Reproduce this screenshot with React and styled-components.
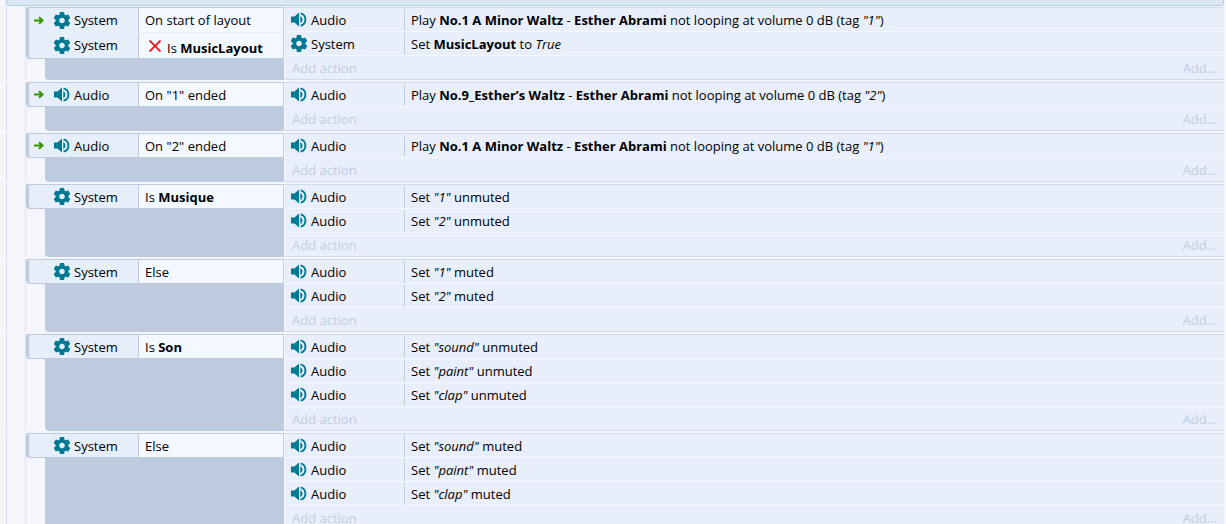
import React from 'react';
import styled, { createGlobalStyle } from 'styled-components';

const GlobalStyle = createGlobalStyle`
    *{
        box-sizing: border-box;
    }
    body{
        margin: 0;
        background-color: #f4f6fc;
        color: #000;
        font-family: "Open Sans", "Noto Sans", sans-serif;
        font-size: 13px;
        line-height: 16px;
        overflow: hidden;
    }
`

const waltz = <>Play <b>No.1 A Minor Waltz</b> - <b>Esther Abrami</b> not looping at volume 0 dB (tag <i>"1"</i>)</>;
const esther = <>Play <b>No.9_Esther’s Waltz</b> - <b>Esther Abrami</b> not looping at volume 0 dB (tag <i>"2"</i>)</>;

const events = [
    {
        conditions: [
            { object: "System", trigger: true, text: "On start of layout" },
            { object: "System", inverted: true, text: <>Is <b>MusicLayout</b></> },
        ],
        actions: [
            { object: "Audio", text: waltz },
            { object: "System", text: <>Set <b>MusicLayout</b> to <i>True</i></> },
        ],
    },
    {
        conditions: [{ object: "Audio", trigger: true, text: 'On "1" ended' }],
        actions: [{ object: "Audio", text: esther }],
    },
    {
        conditions: [{ object: "Audio", trigger: true, text: 'On "2" ended' }],
        actions: [{ object: "Audio", text: waltz }],
    },
    {
        conditions: [{ object: "System", text: <>Is <b>Musique</b></> }],
        actions: [
            { object: "Audio", text: <>Set <i>"1"</i> unmuted</> },
            { object: "Audio", text: <>Set <i>"2"</i> unmuted</> },
        ],
    },
    {
        conditions: [{ object: "System", text: "Else" }],
        actions: [
            { object: "Audio", text: <>Set <i>"1"</i> muted</> },
            { object: "Audio", text: <>Set <i>"2"</i> muted</> },
        ],
    },
    {
        conditions: [{ object: "System", text: <>Is <b>Son</b></> }],
        actions: [
            { object: "Audio", text: <>Set <i>"sound"</i> unmuted</> },
            { object: "Audio", text: <>Set <i>"paint"</i> unmuted</> },
            { object: "Audio", text: <>Set <i>"clap"</i> unmuted</> },
        ],
    },
    {
        conditions: [{ object: "System", text: "Else" }],
        actions: [
            { object: "Audio", text: <>Set <i>"sound"</i> muted</> },
            { object: "Audio", text: <>Set <i>"paint"</i> muted</> },
            { object: "Audio", text: <>Set <i>"clap"</i> muted</> },
        ],
    },
];

const teeth = [0, 60, 120, 180, 240, 300];

function GearIcon() {
    return (
        <Icon viewBox="-8 -8.5 16 17">
            <circle r="4.500" fill="none" stroke="#007a93" strokeWidth="3.400" />
            {teeth.map(angle => (
                <path key={angle} fill="#007a93" transform={`rotate(${angle})`} d="M-2.800 -5L-2 -8.400H2L2.800 -5z" />
            ))}
        </Icon>
    )
}

function SpeakerIcon() {
    return (
        <Icon viewBox="0 0 16 17">
            <path fill="#007a93" d="M0 5.500h3.500L8 1.500v14l-4.500-4H0z" />
            <path fill="#007a93" d="M9.300 5a3.900 3.900 0 0 1 0 7z" />
            <path fill="none" stroke="#007a93" strokeWidth="1.900" d="M9.600 2.300a6.400 6.400 0 0 1 0 12.400" />
        </Icon>
    )
}

function ObjectName({ name }) {
    return (
        <ObjectCell>
            {name === "System" ? <GearIcon /> : <SpeakerIcon />}
            <span>{name}</span>
        </ObjectCell>
    )
}

function EventBlock({ conditions, actions }) {
    return (
        <Event>
            <Conditions>
                <ConditionList>
                    {conditions.map((condition, i) => (
                        <Condition key={i} $tall={condition.inverted}>
                            <Marker>
                                {condition.trigger && (
                                    <Arrow viewBox="0 0 10 9">
                                        <path fill="none" stroke="#399400" strokeWidth="2" d="M0 4.500h8M5 1.200L8.600 4.500L5 7.800" />
                                    </Arrow>
                                )}
                            </Marker>
                            <ObjectName name={condition.object} />
                            <ConditionText>
                                {condition.inverted && (
                                    <Cross viewBox="0 0 12 12">
                                        <path fill="none" stroke="#f5141c" strokeWidth="1.800" d="M0.500 0.500l11 11M11.500 0.500L0.500 11.500" />
                                    </Cross>
                                )}
                                <Label $low={condition.inverted}>{condition.text}</Label>
                            </ConditionText>
                        </Condition>
                    ))}
                </ConditionList>
                <Filler />
            </Conditions>
            <Actions>
                {actions.map((action, i) => (
                    <Action key={i}>
                        <ObjectName name={action.object} />
                        <ActionText>{action.text}</ActionText>
                    </Action>
                ))}
                <AddRow>
                    <AddLink href="#">Add action</AddLink>
                    <AddLink href="#">Add...</AddLink>
                </AddRow>
            </Actions>
        </Event>
    )
}

function App() {
    return (
        <>
            <GlobalStyle />
            <Sheet>
                <GroupBar />
                <Events>
                    {events.map((event, i) => (
                        <EventBlock key={i} {...event} />
                    ))}
                </Events>
            </Sheet>
        </>
    )
}

export default App;

const Sheet = styled.main`
    padding: 0 2px 0 6px;
    height: 100vh;
    overflow: hidden;
`

const GroupBar = styled.div`
    height: 6px;
    background-color: #dbe7f5;
    border: 1px solid #b9cce3;
    border-top: none;
    border-radius: 0 0 3px 3px;
`

const Events = styled.div`
    display: flex;
    flex-direction: column;
    gap: 2px;
    padding-top: 1px;
`

const Event = styled.section`
    display: grid;
    grid-template-columns: 259px 1fr;
    border-left: 1px solid #d5dded;
    padding-left: 18px;
`

const Conditions = styled.div`
    display: flex;
    flex-direction: column;
    border-left: 1px solid #dfe5f0;
`

const ConditionList = styled.div`
    background-color: #e5eef9;
    border: 1px solid #becbdf;
    border-left-width: 3px;
    border-radius: 2px 0 0 4px;
`

const Filler = styled.div`
    flex: 1;
    margin-left: 19px;
    background-color: #becbdf;
    border-bottom-left-radius: 4px;
`

const Condition = styled.div`
    display: grid;
    grid-template-columns: 25px 84px 1fr;
    height: ${props => props.$tall ? "26px" : "24px"};

    &:not(:first-child) > :last-child{
        border-top: 1px solid #e5edf9;
    }
    &:last-child:first-child{
        height: 23px;
    }
`

const Marker = styled.div`
    display: flex;
    align-items: center;
    padding-left: 5px;
`

const Arrow = styled.svg`
    width: 10px;
    height: 9px;
`

const Icon = styled.svg`
    width: 16px;
    height: 17px;
    flex: none;
`

const ObjectCell = styled.div`
    display: flex;
    align-items: center;
    gap: 4px;
`

const ConditionText = styled.div`
    display: flex;
    align-items: center;
    gap: 6px;
    padding-left: 6px;
    background-color: #f4f8ff;
    border-left: 1px solid #becbdf;
`

const Cross = styled.svg`
    width: 12px;
    height: 12px;
    margin-left: 4px;
`

const Label = styled.span`
    padding-top: ${props => props.$low ? "4px" : "0"};
`

const Actions = styled.div`
    background-color: #e8eefa;
    border: 1px solid #d0daeb;
    border-left-color: #f4f6fc;
    border-right: none;
`

const Action = styled.div`
    display: grid;
    grid-template-columns: 113px 1fr;
    height: 24px;
    padding-left: 6px;
    border-bottom: 1px solid #f4f6fc;
`

const ActionText = styled.div`
    display: flex;
    align-items: center;
    margin-top: 1px;
    padding-left: 6px;
    border-left: 1px solid #becbdf;
    white-space: pre;
`

const AddRow = styled.div`
    display: flex;
    justify-content: space-between;
    align-items: center;
    height: 23px;
    padding: 0 7px;
`

const AddLink = styled.a`
    color: #c2cde2;
    text-decoration: none;
`
